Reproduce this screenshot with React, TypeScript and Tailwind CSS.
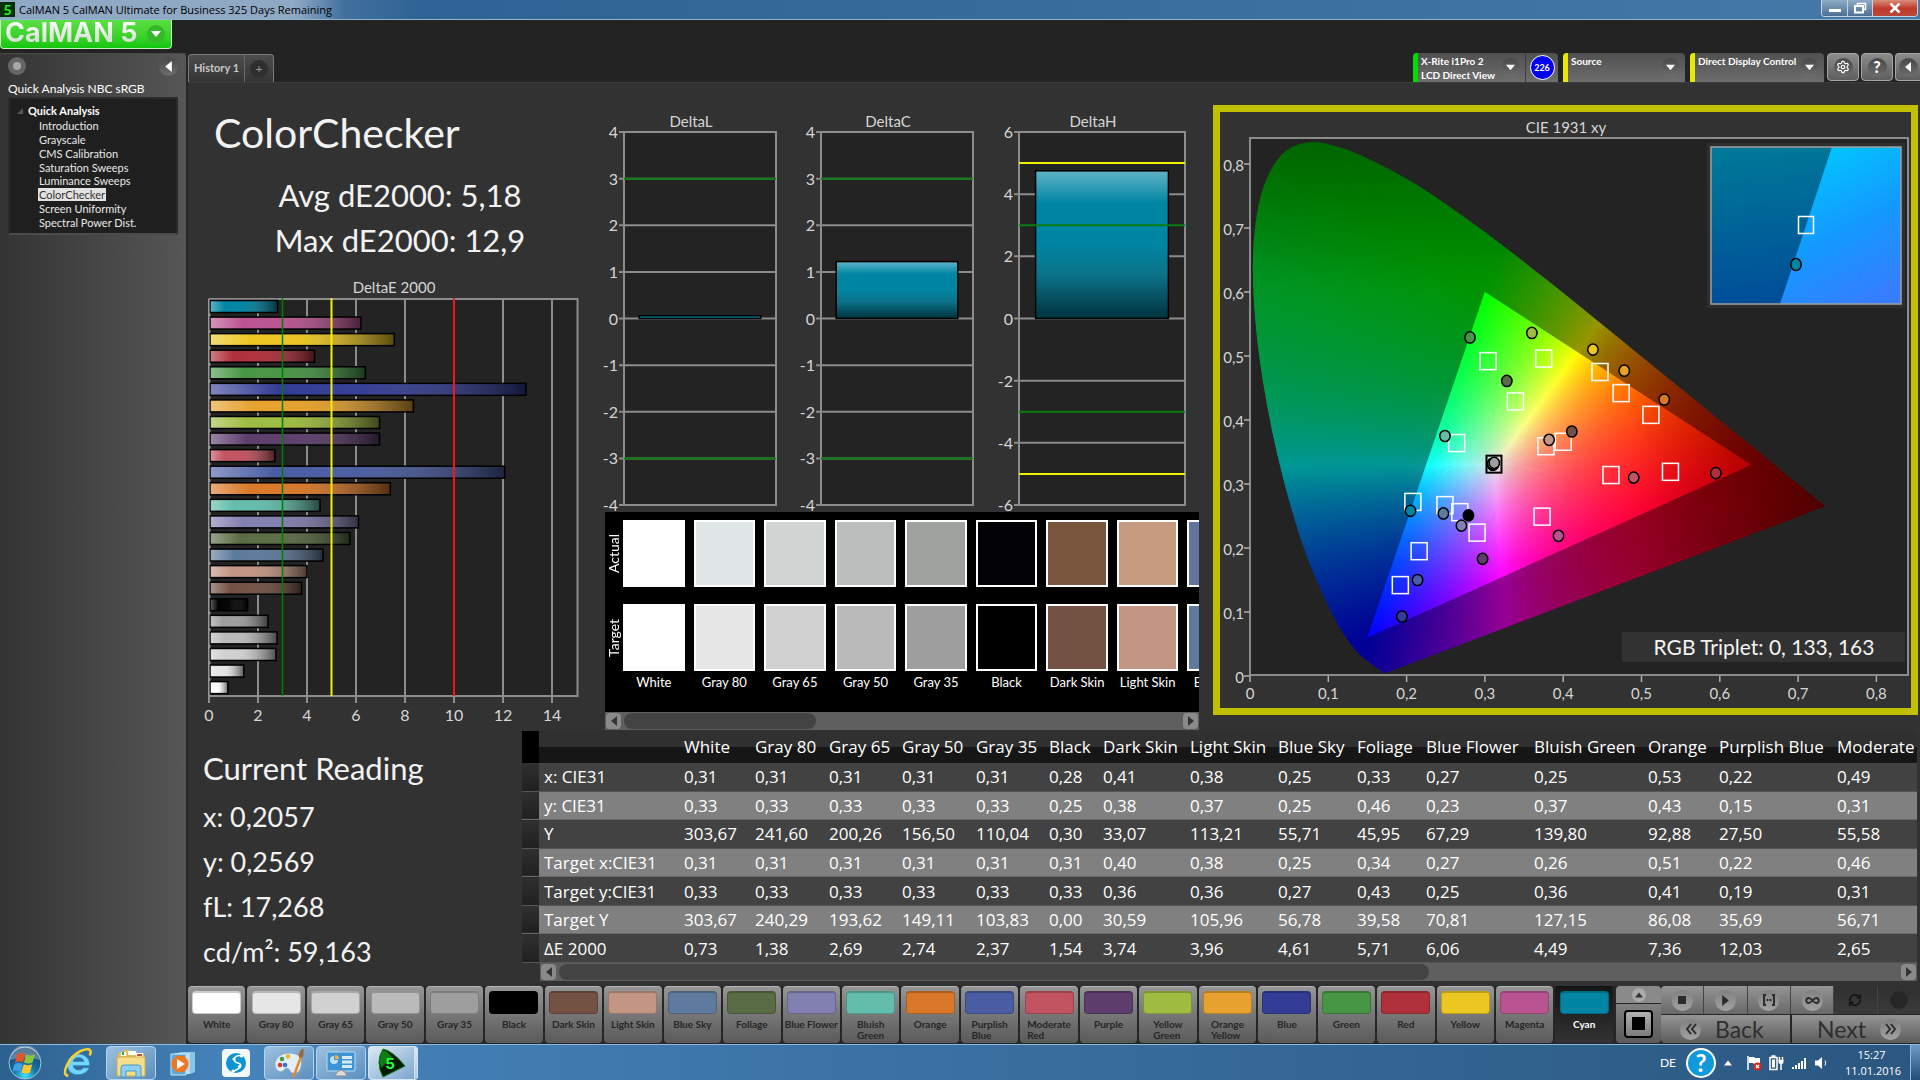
import { type ReactNode } from "react";
import { Infinity as InfinityIcon, RefreshCw, Settings } from "lucide-react";

type Patch = {
  name: string;
  color: string;
  dE: number;
  actual: [number, number];
  target: [number, number];
};

const patches: Patch[] = [
  { name: "White", color: "#ffffff", dE: 0.73, actual: [0.311, 0.331], target: [0.3116, 0.331] },
  { name: "Gray 80", color: "#e6e6e6", dE: 1.38, actual: [0.31, 0.33], target: [0.3116, 0.331] },
  { name: "Gray 65", color: "#d1d1d1", dE: 2.69, actual: [0.31, 0.331], target: [0.3116, 0.331] },
  { name: "Gray 50", color: "#bababa", dE: 2.74, actual: [0.31, 0.332], target: [0.3116, 0.331] },
  { name: "Gray 35", color: "#9e9e9e", dE: 2.37, actual: [0.312, 0.333], target: [0.3116, 0.331] },
  { name: "Black", color: "#000000", dE: 1.54, actual: [0.279, 0.251], target: [0.3116, 0.331] },
  { name: "Dark Skin", color: "#735244", dE: 3.74, actual: [0.411, 0.382], target: [0.4, 0.366] },
  { name: "Light Skin", color: "#c29682", dE: 3.96, actual: [0.382, 0.369], target: [0.378, 0.359] },
  { name: "Blue Sky", color: "#5e7a9c", dE: 4.61, actual: [0.247, 0.254], target: [0.249, 0.267] },
  { name: "Foliage", color: "#596c43", dE: 5.71, actual: [0.328, 0.461], target: [0.339, 0.429] },
  { name: "Blue Flower", color: "#8280b0", dE: 6.06, actual: [0.27, 0.235], target: [0.268, 0.256] },
  { name: "Bluish Green", color: "#63bdaa", dE: 4.49, actual: [0.249, 0.375], target: [0.264, 0.364] },
  { name: "Orange", color: "#d97829", dE: 7.36, actual: [0.529, 0.432], target: [0.512, 0.408] },
  { name: "Purplish Blue", color: "#4a5ca3", dE: 12.03, actual: [0.214, 0.15], target: [0.216, 0.195] },
  { name: "Moderate Red", color: "#c25461", dE: 2.65, actual: [0.49, 0.31], target: [0.461, 0.314] },
  { name: "Purple", color: "#5c3d6b", dE: 6.92, actual: [0.297, 0.183], target: [0.29, 0.224] },
  { name: "Yellow Green", color: "#9ebc40", dE: 6.92, actual: [0.36, 0.536], target: [0.375, 0.496] },
  { name: "Orange Yellow", color: "#e6a12e", dE: 8.3, actual: [0.478, 0.477], target: [0.474, 0.442] },
  { name: "Blue", color: "#333d96", dE: 12.9, actual: [0.194, 0.093], target: [0.192, 0.142] },
  { name: "Green", color: "#479645", dE: 6.34, actual: [0.281, 0.529], target: [0.304, 0.492] },
  { name: "Red", color: "#b0303b", dE: 4.27, actual: [0.595, 0.317], target: [0.537, 0.319] },
  { name: "Yellow", color: "#edc721", dE: 7.52, actual: [0.438, 0.51], target: [0.447, 0.475] },
  { name: "Magenta", color: "#ba5491", dE: 6.16, actual: [0.394, 0.219], target: [0.373, 0.249] },
  { name: "Cyan", color: "#0085a3", dE: 2.76, actual: [0.205, 0.258], target: [0.208, 0.272] },
];

const measured = [
  "#ffffff", "#e1e6e6", "#d0d4d2", "#babebc", "#a0a2a0", "#030306", "#78553c", "#c69b80", "#61759f",
];

const columns = [
  { name: "White", width: 71 },
  { name: "Gray 80", width: 74 },
  { name: "Gray 65", width: 73 },
  { name: "Gray 50", width: 74 },
  { name: "Gray 35", width: 73 },
  { name: "Black", width: 54 },
  { name: "Dark Skin", width: 87 },
  { name: "Light Skin", width: 88 },
  { name: "Blue Sky", width: 79 },
  { name: "Foliage", width: 69 },
  { name: "Blue Flower", width: 108 },
  { name: "Bluish Green", width: 114 },
  { name: "Orange", width: 71 },
  { name: "Purplish Blue", width: 118 },
  { name: "Moderate Red", width: 131 },
];

const rows = [
  { label: "x: CIE31", values: "0,31 0,31 0,31 0,31 0,31 0,28 0,41 0,38 0,25 0,33 0,27 0,25 0,53 0,22 0,49" },
  { label: "y: CIE31", values: "0,33 0,33 0,33 0,33 0,33 0,25 0,38 0,37 0,25 0,46 0,23 0,37 0,43 0,15 0,31" },
  { label: "Y", values: "303,67 241,60 200,26 156,50 110,04 0,30 33,07 113,21 55,71 45,95 67,29 139,80 92,88 27,50 55,58" },
  { label: "Target x:CIE31", values: "0,31 0,31 0,31 0,31 0,31 0,31 0,40 0,38 0,25 0,34 0,27 0,26 0,51 0,22 0,46" },
  { label: "Target y:CIE31", values: "0,33 0,33 0,33 0,33 0,33 0,33 0,36 0,36 0,27 0,43 0,25 0,36 0,41 0,19 0,31" },
  { label: "Target Y", values: "303,67 240,29 193,62 149,11 103,83 0,00 30,59 105,96 56,78 39,58 70,81 127,15 86,08 35,69 56,71" },
  { label: "ΔE 2000", values: "0,73 1,38 2,69 2,74 2,37 1,54 3,74 3,96 4,61 5,71 6,06 4,49 7,36 12,03 2,65" },
];

const steps = [
  "Introduction",
  "Grayscale",
  "CMS Calibration",
  "Saturation Sweeps",
  "Luminance Sweeps",
  "ColorChecker",
  "Screen Uniformity",
  "Spectral Power Dist.",
];

/* ---------- small shared parts ---------- */

const Triangle = ({ dir, className }: { dir: "left" | "right" | "up" | "down"; className?: string }) => {
  const points = {
    left: "8,0 8,10 2,5",
    right: "2,0 2,10 8,5",
    up: "0,8 10,8 5,2",
    down: "0,2 10,2 5,8",
  };
  return (
    <svg viewBox="0 0 10 10" className={className} fill="currentColor" aria-hidden="true">
      <polygon points={points[dir]} />
    </svg>
  );
};

const Knob = ({ children }: { children?: ReactNode }) => (
  <span className="flex size-[19px] shrink-0 items-center justify-center rounded-full bg-linear-to-b from-[#484848] to-[#6e6e6e] text-white">
    {children}
  </span>
);

const ScrollBar = ({ thumb }: { thumb: string }) => (
  <div className="flex h-[18px] items-center gap-[3px] bg-[#5f5f5f] px-px">
    <button aria-label="Scroll left" className="flex h-4 w-[15px] items-center justify-center rounded bg-[#8a8a8a] text-[#333]">
      <Triangle dir="left" className="h-3 w-[10px]" />
    </button>
    <div className="h-4 flex-1">
      <div className={`h-4 rounded-lg bg-[#434343] ${thumb}`} />
    </div>
    <button aria-label="Scroll right" className="flex h-4 w-[15px] items-center justify-center rounded bg-[#8a8a8a] text-[#333]">
      <Triangle dir="right" className="h-3 w-[10px]" />
    </button>
  </div>
);

/* ---------- window chrome ---------- */

const TitleBar = () => (
  <header className="flex h-5 items-start justify-between border-b border-[#8fb4d4] bg-linear-to-r from-[#8ba6c2] via-[#2f6395] via-22% to-[#4579a8]">
    <div className="flex h-full items-center gap-1 bg-linear-to-r from-[#8fa9c4] from-85% to-transparent pr-3">
      <span className="flex h-[15px] w-[15px] items-center justify-center bg-[#06300a] text-sm leading-none font-bold text-[#25f52b]">5</span>
      <h1 className="font-['Open_Sans',sans-serif] text-[11px] leading-4 text-black">CalMAN 5 CalMAN Ultimate for Business 325 Days Remaining</h1>
    </div>
    <div className="mr-[2px] flex h-[17px] overflow-hidden rounded-b border border-t-0 border-[#c3d3e2]">
      <button aria-label="Minimize" className="flex w-[26px] items-end justify-center border-r border-[#c3d3e2] bg-linear-to-b from-[#8fabc6] to-[#4d7196] pb-1">
        <span className="h-[3px] w-3 bg-white" />
      </button>
      <button aria-label="Restore" className="flex w-[25px] items-center justify-center border-r border-[#c3d3e2] bg-linear-to-b from-[#8fabc6] to-[#4d7196]">
        <svg viewBox="0 0 14 12" className="h-3 w-[14px]" fill="none" stroke="#fff" strokeWidth="2">
          <path d="M4.5 3V1.5h8v6H11" strokeWidth="1.5" />
          <rect x="2" y="4" width="8" height="6.5" />
        </svg>
      </button>
      <button aria-label="Close" className="flex w-[44px] items-center justify-center bg-linear-to-b from-[#d98c7c] via-[#c0392b] to-[#b8493a]">
        <svg viewBox="0 0 12 10" className="h-[10px] w-3" stroke="#fff" strokeWidth="2.6">
          <path d="M1.5 0.5 10.5 9.5M10.5 0.5 1.5 9.5" />
        </svg>
      </button>
    </div>
  </header>
);

const Logo = () => (
  <button className="flex h-[29px] w-[172px] items-start justify-between rounded-b border border-t-0 border-[#c4f5b8] bg-linear-to-b from-[#5be043] to-[#0fc70a] pr-[6px] pl-1 whitespace-nowrap">
    <span className="bg-linear-to-b from-white to-[#cfd8cc] bg-clip-text font-[Inter,sans-serif] text-[27px] leading-[26px] font-bold text-transparent">CalMAN 5</span>
    <span className="mt-[5px] flex size-[18px] items-center justify-center rounded-full bg-[#35b92a] text-white">
      <Triangle dir="down" className="size-[10px]" />
    </span>
  </button>
);

const Device = ({ color, lines, width, children }: { color: string; lines: string[]; width: string; children?: ReactNode }) => (
  <div className={`flex h-[29px] overflow-hidden rounded-t bg-linear-to-b from-[#505050] to-[#6e6e6e] ${width}`}>
    <span className={`w-[5px] shrink-0 ${color}`} />
    <button className="flex flex-1 items-start justify-between pt-px pr-[5px] pl-[3px] text-left text-[10px] leading-[14px] font-bold whitespace-nowrap text-white">
      <span>
        {lines.map((line) => (
          <span key={line} className="block">
            {line}
          </span>
        ))}
      </span>
      <span className="mt-1">
        <Knob>
          <Triangle dir="down" className="size-[9px]" />
        </Knob>
      </span>
    </button>
    {children}
  </div>
);

const squareButton =
  "flex h-[28px] w-8 items-center justify-center rounded border border-[#a5a5a5] bg-linear-to-b from-[#8c8c8c] to-[#5e5e5e] text-white";

const Toolbar = () => (
  <div className="flex items-end justify-between pt-[5px]">
    <div className="flex h-7 rounded-t border border-b-0 border-[#7a7a7a] bg-linear-to-b from-[#4c4c4c] to-[#353535]">
      <button className="w-[55px] text-[11px] font-bold whitespace-nowrap text-[#c8c8c8]">History 1</button>
      <button aria-label="Add history" className="flex w-[29px] items-center justify-center border-l border-[#6a6a6a]">
        <span className="flex size-[18px] items-center justify-center rounded-full bg-[#2f2f2f] text-xs text-[#9a9a9a]">+</span>
      </button>
    </div>
    <div className="flex gap-[5px]">
      <Device color="bg-[#00dc00]" lines={["X-Rite i1Pro 2", "LCD Direct View"]} width="w-[145px]">
        <span className="flex w-[33px] items-center justify-center border-l border-[#3c3c3c]">
          <span className="flex size-[25px] items-center justify-center rounded-full border border-white bg-[#0000f0] text-[9px] font-bold text-white">226</span>
        </span>
      </Device>
      <Device color="bg-[#e8e800]" lines={["Source"]} width="w-[122px]" />
      <Device color="bg-[#e8e800]" lines={["Direct Display Control"]} width="w-[134px]" />
      <div className="-ml-[2px] flex gap-[2px]">
        <button aria-label="Settings" className={squareButton}>
          <Knob>
            <Settings className="size-[14px]" />
          </Knob>
        </button>
        <button aria-label="Help" className={squareButton}>
          <Knob>
            <span className="text-base leading-none font-black">?</span>
          </Knob>
        </button>
        <button aria-label="Collapse" className={`${squareButton} w-[25px] rounded-r-none border-r-0`}>
          <Knob>
            <Triangle dir="left" className="size-[10px]" />
          </Knob>
        </button>
      </div>
    </div>
  </div>
);

const Sidebar = () => (
  <aside className="w-[188px] shrink-0 rounded-tr border-t border-r-2 border-t-[#4a4a4a] border-r-[#262626] bg-linear-to-r from-[#343434] to-[#565656] px-2">
    <div className="flex h-6 items-center justify-between">
      <span className="flex size-[18px] items-center justify-center rounded-full bg-[#666]">
        <span className="size-2 rounded-full bg-[#a8a8a8]" />
      </span>
      <button aria-label="Hide workflow">
        <Knob>
          <Triangle dir="left" className="size-[11px]" />
        </Knob>
      </button>
    </div>
    <h2 className="mt-[2px] h-[17px] text-[12px] leading-[17px] whitespace-nowrap text-white">Quick Analysis NBC sRGB</h2>
    <nav className="h-[138px] border-2 border-[#2b2b2b] border-b-[#4b4b4b] bg-[#1f1f1f] pt-1 text-[11px] text-[#e8e8e8]">
      <div className="flex h-4 items-center gap-[5px] pl-[7px] font-bold text-white">
        <svg viewBox="0 0 6 6" className="size-[6px] fill-[#555]">
          <path d="M6 0v6H0z" />
        </svg>
        Quick Analysis
      </div>
      <ul className="grid h-[110px] grid-rows-8 pl-[29px]">
        {steps.map((step) => (
          <li key={step} className="flex items-center">
            <a href="#" className={step === "ColorChecker" ? "-ml-px bg-[#e2e2e2] px-px leading-[13px] text-[#333]" : "leading-[13px]"}>
              {step}
            </a>
          </li>
        ))}
      </ul>
    </nav>
  </aside>
);

/* ---------- charts ---------- */

const DeltaEChart = () => {
  const x = (v: number) => 21 + v * 24.5;
  const bars = [...patches].reverse();
  return (
    <svg viewBox="0 0 417 454" className="h-[454px] w-[417px] overflow-visible text-base" role="img" aria-label="DeltaE 2000 per patch">
      <text x="206" y="18" textAnchor="middle" fill="#d6d6d6" className="text-[15px]">
        DeltaE 2000
      </text>
      <rect x="21.5" y="24" width="368" height="397" fill="#232323" stroke="#8c8c8c" strokeWidth="2" />
      {[0, 2, 4, 6, 8, 10, 12, 14].map((v) => (
        <g key={v}>
          <line x1={x(v)} x2={x(v)} y1="24" y2="428" stroke="#8c8c8c" strokeWidth="2" />
          <text x={x(v)} y="446" textAnchor="middle" fill="#d6d6d6">
            {v}
          </text>
        </g>
      ))}
      {bars.map((p, i) => {
        const y = 25.5 + i * 16.57;
        return (
          <g key={p.name}>
            <rect x="22" y={y} width={p.dE * 24.5} height="12" fill={p.color} />
            <rect x="22" y={y} width={p.dE * 24.5} height="12" fill="url(#barShade)" stroke="#000" strokeWidth="1.5" />
          </g>
        );
      })}
      <line x1={x(0)} x2={x(0)} y1="24" y2="421" stroke="#a0a0a0" />
      <line x1={x(3)} x2={x(3)} y1="23" y2="421" stroke="#008000" strokeWidth="1.5" />
      <line x1={x(5)} x2={x(5)} y1="23" y2="421" stroke="#f0f000" strokeWidth="2" />
      <line x1={x(10)} x2={x(10)} y1="23" y2="421" stroke="#f01818" strokeWidth="2" />
      <defs>
        <linearGradient id="barShade">
          <stop offset="0" stopColor="#fff" stopOpacity="0.38" />
          <stop offset="0.22" stopColor="#fff" stopOpacity="0" />
          <stop offset="0.5" stopColor="#888" stopOpacity="0.05" />
          <stop offset="1" stopColor="#000" stopOpacity="0.62" />
        </linearGradient>
      </defs>
    </svg>
  );
};

type DeltaProps = {
  title: string;
  max: number;
  step: number;
  value: number;
  plot: number;
  width: string;
  box: number;
  limits: { at: number; color: string }[];
};

const DeltaChart = ({ title, max, step, value, plot, width, box, limits }: DeltaProps) => {
  const y = (v: number) => 206.5 - (v / max) * 186.5;
  const ticks: number[] = [];
  for (let v = max; v >= -max; v -= step) ticks.push(v);
  return (
    <svg viewBox={`0 0 ${box} 400`} className={`h-[400px] overflow-visible text-base ${width}`} role="img" aria-label={title}>
      <text x={19 + plot / 2 - 9} y="15" textAnchor="middle" fill="#d6d6d6" className="text-[15px]">
        {title}
      </text>
      <rect x="19" y="20" width={plot} height="373" fill="#232323" />
      {ticks.map((v) => (
        <g key={v}>
          <line x1="14" x2={19 + plot} y1={y(v)} y2={y(v)} stroke="#8c8c8c" strokeWidth="2" />
          <text x="13" y={y(v) + 6} textAnchor="end" fill="#d6d6d6">
            {v}
          </text>
        </g>
      ))}
      <rect x="19" y="20" width={plot} height="373" fill="none" stroke="#8c8c8c" strokeWidth="2" />
      <rect x={19 + plot * 0.1} y={y(value)} width={plot * 0.8} height={y(0) - y(value)} fill="url(#cyanShade)" stroke="#000" strokeWidth="1.5" />
      {limits.map((l) => (
        <line key={l.at} x1="19" x2={19 + plot} y1={y(l.at)} y2={y(l.at)} stroke={l.color} strokeWidth="2" />
      ))}
      <defs>
        <linearGradient id="cyanShade" x2="0" y2="1">
          <stop offset="0" stopColor="#60b3c8" />
          <stop offset="0.22" stopColor="#0085a3" />
          <stop offset="0.5" stopColor="#0085a3" />
          <stop offset="0.7" stopColor="#0c7389" />
          <stop offset="1" stopColor="#00323e" />
        </linearGradient>
      </defs>
    </svg>
  );
};

/* spectral locus, 380 to 700 nm */
const locus: [number, number][] = [
  [0.1741, 0.005], [0.1714, 0.0051], [0.1689, 0.0069], [0.1644, 0.0109], [0.1566, 0.0177], [0.144, 0.0297],
  [0.1355, 0.0399], [0.1241, 0.0578], [0.1096, 0.0868], [0.0913, 0.1327], [0.0687, 0.2007], [0.0454, 0.295],
  [0.0235, 0.4127], [0.0082, 0.5384], [0.0039, 0.6548], [0.0139, 0.7502], [0.0389, 0.812], [0.0743, 0.8338],
  [0.1142, 0.8262], [0.1547, 0.8059], [0.1929, 0.7816], [0.2296, 0.7543], [0.3016, 0.6923], [0.3731, 0.6245],
  [0.4441, 0.5547], [0.5125, 0.4866], [0.5752, 0.4242], [0.627, 0.3725], [0.6658, 0.334], [0.6915, 0.3083],
  [0.719, 0.2809], [0.7347, 0.2653],
];

const px = (x: number) => 30 + x * 783;
const py = (y: number) => 564 - y * 640;
const white = { x: 0.3127, y: 0.329 };

const locusPath = () => {
  const pts = locus.map(([x, y]) => [px(x), py(y)]);
  let d = `M${pts[0][0]} ${pts[0][1]}`;
  for (let i = 0; i < pts.length - 1; i++) {
    const a = pts[Math.max(i - 1, 0)];
    const b = pts[i];
    const c = pts[i + 1];
    const e = pts[Math.min(i + 2, pts.length - 1)];
    d += `C${b[0] + (c[0] - a[0]) / 6} ${b[1] + (c[1] - a[1]) / 6} ${c[0] - (e[0] - b[0]) / 6} ${c[1] - (e[1] - b[1]) / 6} ${c[0]} ${c[1]}`;
  }
  return d + "Z";
};

const xyToRgb = (x: number, y0: number, dim: number) => {
  const y = Math.max(y0, 0.001);
  const z = 1 - x - y;
  const rgb = [
    3.2406 * x - 1.5372 * y - 0.4986 * z,
    -0.9689 * x + 1.8758 * y + 0.0415 * z,
    0.0557 * x - 0.204 * y + 1.057 * z,
  ].map((c) => Math.max(c, 0));
  const top = Math.max(...rgb);
  // deep reds and deep greens get darker towards the edge of the locus
  const fade = 1 - Math.max(0, Math.min(0.5, (x - 0.49) * 2)) - Math.max(0, Math.min(0.4, (y - 0.6) * 1.4));
  return `rgb(${rgb.map((c) => Math.round((c / top) * 255 * dim * fade)).join(",")})`;
};

const Wheel = ({ id, radius, dim, clip }: { id: string; radius: number; dim: number; clip: string }) => {
  const count = 360;
  const stops = 14;
  const cx = px(white.x);
  const cy = py(white.y);
  const wedges = Array.from({ length: count }, (_, i) => (i * 2 * Math.PI) / count);
  const half = (1.6 * Math.PI) / count;
  return (
    <g clipPath={`url(#${clip})`}>
      {wedges.map((a, i) => {
        const ex = cx + radius * Math.cos(a);
        const ey = cy + radius * Math.sin(a);
        const r = radius * 1.3;
        return (
          <g key={i}>
            <linearGradient id={`${id}${i}`} gradientUnits="userSpaceOnUse" x1={cx} y1={cy} x2={ex} y2={ey}>
              {Array.from({ length: stops + 1 }, (_, s) => {
                const t = s / stops;
                const x = (cx + (ex - cx) * t - 30) / 783;
                const y = (564 - cy - (ey - cy) * t) / 640;
                return <stop key={s} offset={t} stopColor={xyToRgb(x, y, dim)} />;
              })}
            </linearGradient>
            <polygon
              fill={`url(#${id}${i})`}
              points={`${cx},${cy} ${cx + r * Math.cos(a - half)},${cy + r * Math.sin(a - half)} ${cx + r * Math.cos(a + half)},${cy + r * Math.sin(a + half)}`}
            />
          </g>
        );
      })}
    </g>
  );
};

const CieChart = () => (
  <svg viewBox="0 0 691 596" className="h-auto w-full overflow-visible text-base" role="img" aria-label="CIE 1931 xy">
    <defs>
      <clipPath id="locus">
        <path d={locusPath()} />
      </clipPath>
      <clipPath id="gamut">
        <polygon points={`${px(0.64)},${py(0.33)} ${px(0.3)},${py(0.6)} ${px(0.15)},${py(0.06)}`} />
      </clipPath>
      <linearGradient id="insetDark" x2="0.15" y2="1">
        <stop offset="0" stopColor="#007a98" />
        <stop offset="1" stopColor="#004e98" />
      </linearGradient>
      <linearGradient id="insetBright" x1="0.3" y1="0" x2="0.7" y2="1">
        <stop offset="0" stopColor="#00c8ff" />
        <stop offset="0.55" stopColor="#1498ff" />
        <stop offset="1" stopColor="#367eff" />
      </linearGradient>
    </defs>
    <text x="346" y="21" textAnchor="middle" fill="#d6d6d6" className="text-[15px]">
      CIE 1931 xy
    </text>
    <rect x="30" y="26" width="658" height="537" fill="#232323" stroke="#8c8c8c" strokeWidth="2" />
    {[0, 1, 2, 3, 4, 5, 6, 7, 8].map((v) => {
      const label = v === 0 ? "0" : `0,${v}`;
      return (
        <g key={v} stroke="#b0b0b0" strokeWidth="1.5">
          <line x1={px(v / 10)} x2={px(v / 10)} y1="564" y2="570" />
          <line x1="24" x2="30" y1={py(v / 10)} y2={py(v / 10)} />
          <text x={px(v / 10)} y="587" textAnchor="middle" stroke="none" fill="#d6d6d6" className="text-[15px]">
            {label}
          </text>
          <text x="24" y={py(v / 10) + 7} textAnchor="end" stroke="none" fill="#d6d6d6" className="text-[15px]">
            {label}
          </text>
        </g>
      );
    })}
    <Wheel id="outer" radius={430} dim={0.59} clip="locus" />
    <Wheel id="inner" radius={280} dim={1} clip="gamut" />
    {patches.slice(6).map((p) => (
      <rect key={p.name} x={px(p.target[0]) - 8} y={py(p.target[1]) - 8.5} width="16" height="17" fill="none" stroke="#fff" strokeWidth="1.5" />
    ))}
    <rect x={px(0.3116) - 7.5} y={py(0.331) - 8.5} width="15" height="17" fill="none" stroke="#000" strokeWidth="2" />
    {patches.map((p) => (
      <ellipse key={p.name} cx={px(p.actual[0])} cy={py(p.actual[1])} rx="5.2" ry="5.6" fill={p.color} stroke="#000" strokeWidth="1.5" />
    ))}
    <rect x="487" y="31" width="198" height="165" fill="#2e2e2e" />
    <rect x="491" y="35" width="190" height="157" fill="url(#insetDark)" />
    <polygon points="612,35 681,35 681,192 560,192" fill="url(#insetBright)" />
    <rect x="491" y="35" width="190" height="157" fill="none" stroke="#a0a0a0" strokeWidth="1.5" />
    <rect x="578.5" y="104.5" width="15" height="17" fill="none" stroke="#fff" strokeWidth="1.5" />
    <ellipse cx="576" cy="152.5" rx="5.2" ry="6" fill="#0085a3" stroke="#000" strokeWidth="1.5" />
    <rect x="402" y="520" width="283" height="30" fill="#323232" />
    <text x="544" y="543" textAnchor="middle" fill="#f4f4f4" className="text-[21px]">
      RGB Triplet: 0, 133, 163
    </text>
  </svg>
);

/* ---------- patch strip ---------- */

const PatchStrip = () => (
  <section className="w-[594px]">
    <div className="flex h-[200px] overflow-hidden bg-black pt-2 text-white">
      <div className="flex w-[18px] shrink-0 flex-col gap-[17px] text-[14px] leading-[18px]">
        <span className="h-[67px] rotate-180 text-center [writing-mode:vertical-rl]">Actual</span>
        <span className="h-[67px] rotate-180 text-center [writing-mode:vertical-rl]">Target</span>
      </div>
      <div className="flex-1 overflow-hidden">
        <div className="grid w-[635px] grid-cols-9 text-center text-[13px]">
          {measured.map((color, i) => (
            <div key={patches[i].name} className="flex flex-col">
              <div className="mr-[9px] h-[67px] border-2 border-white" style={{ backgroundColor: color }} />
              <div className="mt-[17px] mr-[9px] h-[67px] border-2 border-white" style={{ backgroundColor: patches[i].color }} />
              <span className="mr-[9px] leading-[22px] whitespace-nowrap">{patches[i].name}</span>
            </div>
          ))}
        </div>
      </div>
    </div>
    <ScrollBar thumb="w-[192px]" />
  </section>
);

/* ---------- readings table ---------- */

const DataTable = () => (
  <section className="min-w-0 flex-1 pt-px pr-[3px]">
    <div className="overflow-hidden">
      <table className="h-[232px] w-[1441px] table-fixed border-collapse text-left font-['Open_Sans',sans-serif] text-[17px] leading-6 whitespace-nowrap text-white">
        <colgroup>
          <col className="w-[17px]" />
          <col className="w-[140px]" />
          {columns.map((c) => (
            <col key={c.name} style={{ width: c.width }} />
          ))}
        </colgroup>
        <thead>
          <tr className="h-8 bg-linear-to-b from-[#303030] from-50% to-[#161616] to-50%">
            <td className="bg-black" />
            <td />
            {columns.map((c) => (
              <th key={c.name} scope="col" className="pl-[5px] font-normal">
                {c.name}
              </th>
            ))}
          </tr>
        </thead>
        <tbody>
          {rows.map((row, i) => (
            <tr key={row.label} className={i % 2 ? "border-b border-[#6a6a6a] bg-[#808080]" : "border-b border-[#555] bg-[#424242]"}>
              <td className="bg-linear-to-b from-[#303030] to-[#202020]" />
              <th scope="row" className="pt-px pl-[5px] font-normal">
                {row.label}
              </th>
              {row.values.split(" ").map((value, j) => (
                <td key={j} className="pt-px pl-[5px]">
                  {value}
                </td>
              ))}
            </tr>
          ))}
        </tbody>
      </table>
    </div>
    <div className="ml-[18px]">
      <ScrollBar thumb="w-[65%]" />
    </div>
  </section>
);

/* ---------- bottom bar ---------- */

const PatchButton = ({ patch, active }: { patch: Patch; active: boolean }) => (
  <button
    className={`flex min-w-0 flex-1 flex-col items-center rounded border-t pt-1 text-[10px] leading-[11px] font-bold ${
      active ? "border-[#111] bg-linear-to-b from-[#161616] to-[#333] text-white" : "border-[#b5b5b5] bg-linear-to-b from-[#959595] to-[#5a5a5a] text-[#262626]"
    }`}
  >
    <span className="h-[23px] w-[49px] rounded border border-t-2 border-black/20" style={{ backgroundColor: patch.color }} />
    <span className="mt-[5px] text-left">
      {patch.name.length > 11 ? (
        patch.name.split(" ").map((word) => (
          <span key={word} className="block">
            {word}
          </span>
        ))
      ) : (
        <span className="whitespace-nowrap">{patch.name}</span>
      )}
    </span>
  </button>
);

const control = "flex flex-1 items-center justify-center border-r border-[#444] bg-linear-to-b from-[#959595] to-[#686868] text-[#2c2c2c]";
const disc = "flex size-[21px] items-center justify-center rounded-full bg-linear-to-b from-[#808080] to-[#a2a2a2]";

const BottomBar = () => (
  <footer className="flex h-[58px] bg-[#262626] pb-px">
    <div className="flex min-w-0 flex-1 gap-[2px]">
      {patches.map((p) => (
        <PatchButton key={p.name} patch={p} active={p.name === "Cyan"} />
      ))}
    </div>
    <div className="ml-[3px] flex w-[45px] flex-col">
      <button aria-label="Expand" className="flex h-[17px] items-center justify-center rounded-t bg-[#8a8a8a] text-[#333]">
        <span className="flex size-[14px] items-center justify-center rounded-full bg-[#aaa]">
          <Triangle dir="up" className="size-2" />
        </span>
      </button>
      <div className="mt-px flex flex-1 items-center justify-center rounded-b bg-linear-to-b from-[#808080] to-[#5a5a5a]">
        <button aria-label="Pattern window" className="flex h-[28px] w-[29px] items-center justify-center rounded border-2 border-black bg-linear-to-b from-[#b0b0b0] to-[#7c7c7c]">
          <span className="size-[13px] bg-black" />
        </button>
      </div>
    </div>
    <div className="flex w-[259px] flex-col gap-px">
      <div className="flex h-7">
        <button aria-label="Stop" className={`${control} rounded-tl`}>
          <span className={disc}>
            <span className="size-2 bg-[#2c2c2c]" />
          </span>
        </button>
        <button aria-label="Play" className={control}>
          <span className={disc}>
            <Triangle dir="right" className="size-[11px]" />
          </span>
        </button>
        <button aria-label="Measure series" className={control}>
          <span className={disc}>
            <svg viewBox="0 0 14 12" className="h-3 w-[14px]" fill="none" stroke="currentColor" strokeWidth="2">
              <path d="M4 1H2v10h2M10 1h2v10h-2M4.5 6h2M7.500 6h2" />
            </svg>
          </span>
        </button>
        <button aria-label="Loop" className={control}>
          <span className={disc}>
            <InfinityIcon className="size-[15px]" strokeWidth={3} />
          </span>
        </button>
        <button aria-label="Refresh" className="flex flex-1 items-center justify-center border-r border-[#444] bg-linear-to-b from-[#303030] to-[#3a3a3a] text-[#151515]">
          <RefreshCw className="size-[14px]" strokeWidth={3} />
        </button>
        <button aria-label="Record" className="flex flex-1 items-center justify-center bg-linear-to-b from-[#303030] to-[#3a3a3a]">
          <span className="size-[18px] rounded-full bg-[#272727]" />
        </button>
      </div>
      <div className="flex flex-1 gap-[2px] text-[23px] leading-none text-[#2e2e2e]">
        <button className="flex flex-1 items-center gap-[14px] rounded-bl bg-linear-to-b from-[#959595] to-[#5c5c5c] pl-[19px]">
          <span className={disc}>
            <svg viewBox="0 0 12 12" className="size-3" fill="none" stroke="currentColor" strokeWidth="2">
              <path d="M6 1 2 6l4 5M11 1 7 6l4 5" />
            </svg>
          </span>
          Back
        </button>
        <button className="flex flex-1 items-center justify-end gap-[14px] bg-linear-to-b from-[#959595] to-[#5c5c5c] pr-[19px]">
          Next
          <span className={disc}>
            <svg viewBox="0 0 12 12" className="size-3" fill="none" stroke="currentColor" strokeWidth="2">
              <path d="m6 1 4 5-4 5M1 1l4 5-4 5" />
            </svg>
          </span>
        </button>
      </div>
    </div>
  </footer>
);

/* ---------- taskbar ---------- */

const StartIcon = () => (
  <svg viewBox="0 0 34 34" className="size-[34px]">
    <defs>
      <radialGradient id="orb" cx="0.5" cy="0.9" r="0.9">
        <stop offset="0" stopColor="#3fe0ff" />
        <stop offset="0.4" stopColor="#1673a8" />
        <stop offset="1" stopColor="#123a5c" />
      </radialGradient>
    </defs>
    <circle cx="17" cy="17" r="16" fill="url(#orb)" stroke="#9fc6e0" />
    <path d="M2 14a15 15 0 0 1 30 0q-15-5-30 0z" fill="#fff" opacity="0.3" />
    <path d="M9 8.500q4-2.500 8-.5L15 16.500q-4-2-8 .3z" fill="#e8542a" />
    <path d="M18 8.500q4 2 9 0l-2.500 8q-4 2-8.500 0z" fill="#8cc63f" />
    <path d="M6.500 18q4-2 8-.3L12.500 25.500q-4-2-8 .3z" fill="#3fa0e8" />
    <path d="M15.700 18.200q4 2 8.500 0L22 26.500q-4 2-8.500 0z" fill="#fcc62a" />
  </svg>
);

const ExplorerE = () => (
  <svg viewBox="0 0 30 30" className="size-[32px]" fill="none">
    <path
      fillRule="evenodd"
      d="M26 17.500H10.500c.5 4.500 7 5.500 9.500 2h5.500c-3.500 9-20 9-20.500-2.500C5 3 26.500 3 26 17.500zM20.500 13.500c-.5-4.500-9-5-10 0z"
      fill="#74d6fa"
      stroke="#2485c4"
      strokeWidth="0.7"
    />
    <path d="M6 27C-2 27 6 9 18 3.500c6-2.500 11-2 8 4.500" stroke="#f6cf2c" strokeWidth="2.400" />
  </svg>
);

const FolderIcon = () => (
  <svg viewBox="0 0 32 30" className="h-[30px] w-8">
    <path d="M3 5h5l1-3h6l1 3h13v23H3z" fill="#e3bf58" />
    <path d="M6 4h5v4H6zM13 3h8v4h-8zM21 5h7v4h-7z" fill="#fff" />
    <path d="M7 4h2v3H7z" fill="#3b9b44" />
    <path d="M22 6h5v2h-5z" fill="#cf4b32" />
    <path d="M2 9h28v19H2z" fill="#f5de8b" stroke="#d3ad45" />
    <path d="M6 29v-9q0-3 3-3h14q3 0 3 3v9h-5v-6h-10v6z" fill="#8fd0f2" stroke="#4a98c9" />
  </svg>
);

const PlayerIcon = () => (
  <svg viewBox="0 0 26 26" className="size-[26px]">
    <path d="M9 2h16v20l-5 2z" fill="#8cc4e8" />
    <path d="M5 3h15v21H5z" fill="#b9def4" />
    <path d="M1 4h15v21H1z" fill="#5fa9d8" stroke="#c9e6f6" />
    <circle cx="10" cy="14" r="8.500" fill="#f0761f" />
    <path d="M7 9v10l8-5z" fill="#fff" />
  </svg>
);

const TealIcon = () => (
  <svg viewBox="0 0 28 28" className="size-7">
    <rect width="28" height="28" rx="4" fill="#f4f8fa" />
    <circle cx="14" cy="14" r="10" fill="#0d94d2" />
    <path d="M19.500 6.500q-6-.5-7 3t3.500 4.500 1.500 5l-6 3.500" stroke="#fff" strokeWidth="1.600" fill="none" />
    <circle cx="19.500" cy="7" r="1.600" fill="#fff" />
    <circle cx="12" cy="10" r="1.600" fill="#fff" />
    <circle cx="17.500" cy="17.500" r="1.600" fill="#fff" />
    <circle cx="11" cy="22" r="1.600" fill="#fff" />
  </svg>
);

const PaintIcon = () => (
  <svg viewBox="0 0 32 30" className="h-[30px] w-8">
    <path d="M16 5C6 5 1 12 2 18s7 7 9 4 5-2 6 1 9 5 11-4S26 5 16 5z" fill="#e4edf6" stroke="#8aa9c6" />
    <circle cx="7" cy="17" r="2.300" fill="#d33a34" />
    <circle cx="9" cy="11" r="2.300" fill="#3f9c45" />
    <circle cx="15" cy="8.500" r="2.300" fill="#e8b72d" />
    <circle cx="12" cy="17" r="2.300" fill="#2f74c9" />
    <path d="M19 29 27 8l2 1-7 20z" fill="#e08b33" />
    <path d="M26 9q-1-5 4-9 2 6-1 10z" fill="#9c6a3c" />
  </svg>
);

const PanelIcon = () => (
  <svg viewBox="0 0 32 30" className="h-[30px] w-8">
    <rect x="2" y="4" width="28" height="19" rx="1" fill="#3e93d6" stroke="#b7dcf4" />
    <path d="M9 8a4 4 0 1 0 4 4H9z" fill="#bfe1f7" />
    <path d="M10 7a4 4 0 0 1 4 4h-4z" fill="#f1b04c" />
    <path d="M17 8h10v3H17zM17 12.500h10v3H17zM17 17h10v3H17z" fill="#d4ecfa" />
    <path d="M10 28q1-5 6-6 5 1 6 6z" fill="#dadada" stroke="#8c8c8c" />
  </svg>
);

const CalmanIcon = () => (
  <svg viewBox="0 0 28 30" className="h-[30px] w-7">
    <path d="M5 1Q-3 14 5 29L27 18Q15 3 5 1z" fill="#031a05" stroke="#0b7a12" />
    <path d="M5 2Q0 10 3 20L14 9Q9 3 5 2z" fill="#0d7d16" />
    <text x="12" y="21" textAnchor="middle" fontWeight="700" fill="#2bff35" className="font-[Inter,sans-serif] text-[15px]">
      5
    </text>
  </svg>
);

const taskBase = "flex h-[34px] items-center justify-center";
const taskOpen = "rounded-sm border border-[#b4d3ec] bg-linear-to-br from-[#9dc0de] to-[#5b8fbf]";

const Taskbar = () => (
  <div className="flex h-9 items-center justify-between border-t border-[#8dbbe0] bg-linear-to-r from-[#2d618f] via-[#4583bb] via-12% to-[#2b5780]">
    <div className="flex items-center">
      <button aria-label="Start" className={`${taskBase} ml-1 w-[42px]`}>
        <StartIcon />
      </button>
      <button aria-label="Internet Explorer" className={`${taskBase} ml-[7px] w-[50px]`}>
        <ExplorerE />
      </button>
      <button aria-label="Explorer" className={`${taskBase} ml-[3px] w-[50px] ${taskOpen}`}>
        <FolderIcon />
      </button>
      <button aria-label="Media Player" className={`${taskBase} ml-[2px] w-[50px]`}>
        <PlayerIcon />
      </button>
      <button aria-label="Remote support" className={`${taskBase} ml-[3px] w-[50px]`}>
        <TealIcon />
      </button>
      <button aria-label="Paint" className={`${taskBase} ml-[3px] w-[50px] ${taskOpen}`}>
        <PaintIcon />
      </button>
      <button aria-label="Control Panel" className={`${taskBase} ml-[2px] w-[50px] ${taskOpen}`}>
        <PanelIcon />
      </button>
      <button aria-label="CalMAN" className={`${taskBase} ml-[2px] w-[50px] rounded-sm border border-r-4 border-double border-[#d6e6f4] bg-linear-to-br from-[#dbe8f3] to-[#7ba6ce]`}>
        <CalmanIcon />
      </button>
    </div>
    <div className="flex h-full items-center text-white">
      <span className="text-xs">DE</span>
      <button aria-label="Help" className="ml-[10px] flex size-[30px] items-center justify-center rounded-full border-2 border-white bg-[#109adb] text-[24px] leading-none font-bold">
        ?
      </button>
      <Triangle dir="up" className="ml-2 size-[8px]" />
      <svg viewBox="0 0 16 16" className="ml-[14px] size-4">
        <path d="M2 1v14" stroke="#fff" strokeWidth="1.500" />
        <path d="M3 2h5l1 1h5v6H8L7 8H3z" fill="#fff" />
        <circle cx="11.500" cy="11.500" r="4" fill="#d8281c" />
        <path d="m10 10 3 3M13 10l-3 3" stroke="#fff" strokeWidth="1.200" />
      </svg>
      <svg viewBox="0 0 16 16" className="ml-[6px] size-4" fill="none" stroke="#fff" strokeWidth="1.500">
        <path d="M2 2.500h7v12H2zM3.500 1h4" />
        <path d="M4 4.500h3v8H4z" fill="#fff" stroke="none" />
        <path d="M11.500 2v4M14.500 2v4" />
        <path d="M10.500 5h5v2q0 2-1.700 2h-1.600q-1.700 0-1.700-2zM12.300 9h1.500v6h-1.500z" fill="#fff" stroke="none" />
      </svg>
      <svg viewBox="0 0 16 16" className="ml-[7px] size-4" fill="#fff">
        <path d="M1 12h2v2H1zM4 10h2v4H4zM7 8h2v6H7zM10 6h2v8h-2zM13 3h2v11h-2z" />
      </svg>
      <svg viewBox="0 0 16 16" className="ml-[6px] size-4" fill="none" stroke="#fff">
        <path d="M2 5.500h3L9 2v12l-4-3.500H2z" fill="#fff" stroke="none" />
        <path d="M12 5.500q1.500 2.500 0 5" />
      </svg>
      <div className="ml-[16px] w-[53px] text-center font-['Open_Sans',sans-serif] text-[11px] leading-4 whitespace-nowrap">
        15:27
        <br />
        11.01.2016
      </div>
      <button aria-label="Show desktop" className="ml-[12px] h-full w-[10px] border-l border-[#8dbbe0] bg-linear-to-b from-[#6c9cc6] to-[#224e78]" />
    </div>
  </div>
);

/* ---------- page ---------- */

const green = "#0a7d12";
const yellow = "#f0f000";

const App = () => (
  <div className="flex min-h-screen flex-col overflow-hidden bg-[#232323] font-[Lato,sans-serif]">
    <TitleBar />
    <Logo />
    <div className="-mt-px flex flex-1">
      <div className="flex pt-[5px]">
        <Sidebar />
      </div>
      <div className="flex min-w-0 flex-1 flex-col">
        <Toolbar />
        <main className="flex flex-1 flex-col border-t border-[#3c3c3c] bg-[#323232]">
          <div className="flex">
            <section className="w-[417px] shrink-0 text-[#f2f2f2]">
              <h2 className="mt-[22px] ml-[26px] h-[60px] text-[41px] leading-[56px]">ColorChecker</h2>
              <p className="mt-2 pl-[7px] text-center text-[31px] leading-[45px]">
                Avg dE2000: 5,18
                <br />
                Max dE2000: 12,9
              </p>
              <div className="mt-3">
                <DeltaEChart />
              </div>
            </section>
            <div className="shrink-0 pt-[29px]">
              <div className="flex">
                <DeltaChart title="DeltaL" max={4} step={1} value={0.06} plot={152} box={197} width="w-[197px]" limits={[{ at: 3, color: green }, { at: -3, color: green }]} />
                <DeltaChart title="DeltaC" max={4} step={1} value={1.22} plot={152} box={198} width="w-[198px]" limits={[{ at: 3, color: green }, { at: -3, color: green }]} />
                <DeltaChart
                  title="DeltaH"
                  max={6}
                  step={2}
                  value={4.75}
                  plot={166}
                  box={199}
                  width="w-[199px]"
                  limits={[{ at: 5, color: yellow }, { at: 3, color: green }, { at: -3, color: green }, { at: -5, color: yellow }]}
                />
              </div>
              <PatchStrip />
            </div>
            <section className="mt-[22px] mr-[2px] ml-[14px] min-w-0 flex-1 self-start border-[7px] border-[#c0c000]">
              <CieChart />
            </section>
          </div>
          <div className="flex flex-1">
            <section className="w-[334px] shrink-0 pt-[12px] pl-[15px] text-[#f2f2f2]">
              <h2 className="text-[31px] leading-[52px]">Current Reading</h2>
              <ul className="text-[27px] leading-[45px]">
                <li>x: 0,2057</li>
                <li>y: 0,2569</li>
                <li>fL: 17,268</li>
                <li>cd/m²: 59,163</li>
              </ul>
            </section>
            <DataTable />
          </div>
          <BottomBar />
        </main>
      </div>
    </div>
    <Taskbar />
  </div>
);

export default App;
